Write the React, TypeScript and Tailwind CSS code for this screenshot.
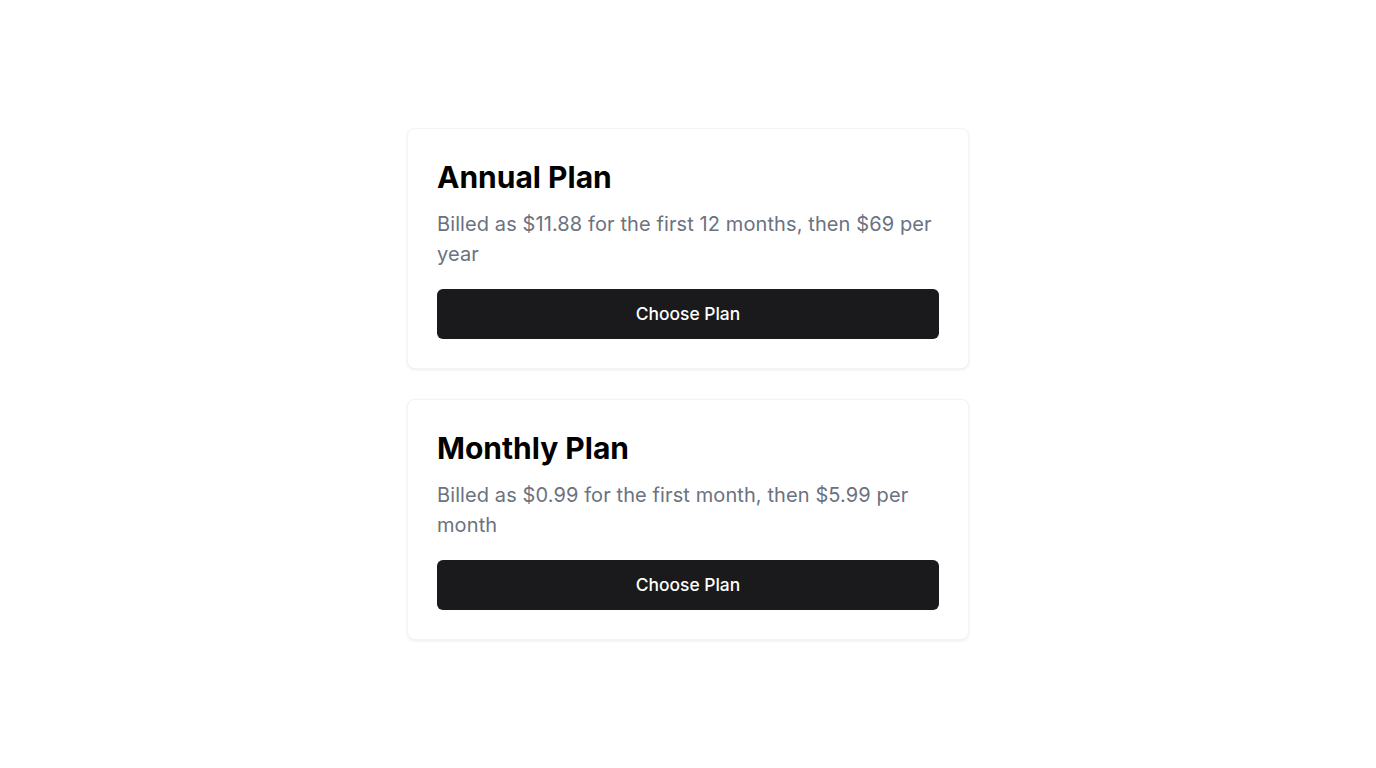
import React from "react";

const plans = [
  { title: "Annual Plan", desc: "Billed as $11.88 for the first 12 months, then $69 per year" },
  { title: "Monthly Plan", desc: "Billed as $0.99 for the first month, then $5.99 per month" },
];

export default function App() {
  return (
    <div
      className="min-h-screen w-full bg-white flex items-center justify-center"
      style={{ fontFamily: "Inter, 'Noto Sans', sans-serif" }}
    >
      <div className="flex flex-col gap-[30px] w-[562px]">
        {plans.map((p) => (
          <div
            key={p.title}
            className="rounded-lg border border-[#f4f4f5] bg-white shadow-[0_1px_3px_rgba(0,0,0,0.08)] px-[29px] pt-[30px] pb-[29px]"
          >
            <h2 className="text-[30px] leading-[36px] font-bold text-black">{p.title}</h2>
            <p className="mt-[14px] text-[20px] leading-[30px] tracking-[0.1px] text-[#6b7280]">{p.desc}</p>
            <button className="mt-5 w-full h-[50px] rounded-md bg-[#1a1a1c] text-white text-[17.4px] leading-[48px] font-medium">
              Choose Plan
            </button>
          </div>
        ))}
      </div>
    </div>
  );
}
